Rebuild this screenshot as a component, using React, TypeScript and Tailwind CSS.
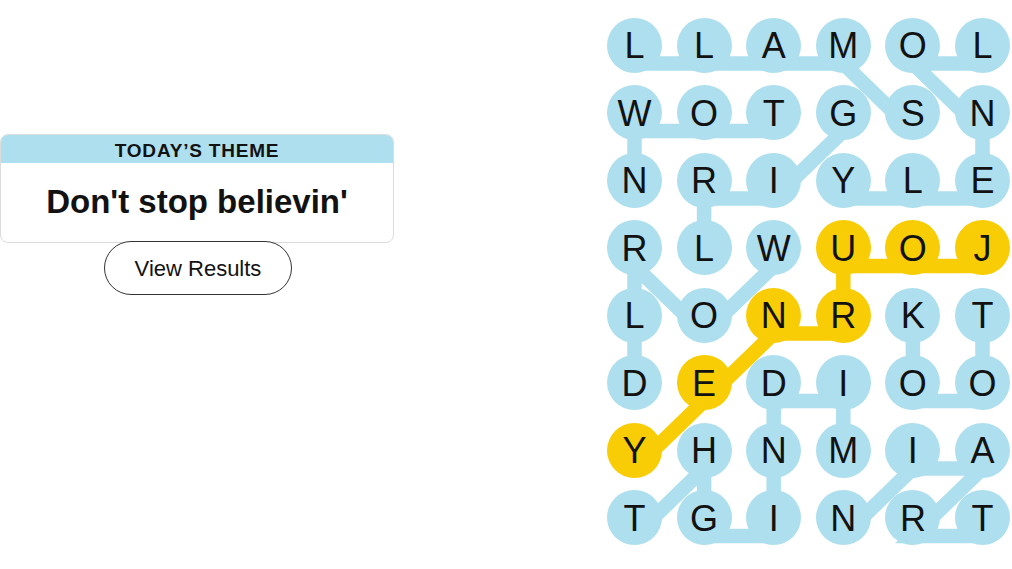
import React from "react";

const LETTERS = [
  "LLAMOL",
  "WOTGSN",
  "NRIYLE",
  "RLWUOJ",
  "LONRKT",
  "DEDIOO",
  "YHNMIA",
  "TGINRT",
];

const BLUE = "#aedfee";
const YELLOW = "#f8cd05";

type Word = { cells: [number, number][]; spangram?: boolean };

const WORDS: Word[] = [
  { cells: [[1, 4], [0, 3], [0, 2], [0, 1], [0, 0]] },
  { cells: [[0, 5], [0, 4], [1, 5], [2, 5], [2, 4], [2, 3]] },
  { cells: [[1, 2], [1, 1], [1, 0], [2, 0]] },
  { cells: [[1, 3], [2, 2], [2, 1], [3, 1]] },
  { cells: [[3, 2], [4, 1], [3, 0], [4, 0], [5, 0]] },
  { cells: [[3, 5], [3, 4], [3, 3], [4, 3], [4, 2], [5, 1], [6, 0]], spangram: true },
  { cells: [[4, 5], [5, 5], [5, 4], [4, 4]] },
  { cells: [[6, 3], [5, 3], [5, 2], [6, 2], [7, 2], [7, 1], [6, 1], [7, 0]] },
  { cells: [[7, 5], [7, 4], [6, 5], [6, 4], [7, 3]] },
];

const colX = (c: number) => 27.5 + c * 69.6;
const rowY = (r: number) => 27.5 + r * 67.5 + 18;

const spanSet = new Set(
  WORDS.filter((w) => w.spangram).flatMap((w) => w.cells.map(([r, c]) => `${r}-${c}`))
);

function Board() {
  return (
    <div className="relative w-[403px] h-[528px]">
      <svg
        className="absolute left-0 top-0 overflow-visible"
        width={403}
        height={528}
        viewBox="0 0 403 528"
      >
        {WORDS.map((w, i) => (
          <polyline
            key={i}
            points={w.cells.map(([r, c]) => `${colX(c)},${rowY(r)}`).join(" ")}
            fill="none"
            stroke={w.spangram ? YELLOW : BLUE}
            strokeWidth={14.5}
            strokeLinejoin="miter"
            strokeLinecap="butt"
          />
        ))}
      </svg>
      <div className="relative grid grid-cols-[repeat(6,55px)] gap-x-[14.6px] gap-y-[12.5px]">
        {LETTERS.flatMap((row, r) =>
          row.split("").map((ch, c) => (
            <div
              key={`${r}-${c}`}
              className={`w-[55px] h-[55px] rounded-full flex items-center justify-center text-[36px] leading-none text-[#121212] font-['Liberation_Sans',Arial,sans-serif] ${
                spanSet.has(`${r}-${c}`) ? "bg-[#f8cd05]" : "bg-[#aedfee]"
              }`}
            >
              <span className="translate-y-[1px]">{ch}</span>
            </div>
          ))
        )}
      </div>
    </div>
  );
}

export default function App() {
  return (
    <div className="w-[1012px] h-[569px] bg-white flex overflow-hidden font-['Liberation_Sans',Arial,sans-serif] text-[#121212]">
      <div className="w-[394px] shrink-0 pt-[134px] flex flex-col">
        <div className="border border-[#dcdcdc] rounded-[8px] overflow-hidden">
          <div className="h-[29px] bg-[#aedfee] flex items-start justify-center pt-[7px] text-[19px] font-bold tracking-[0.8px] leading-none -mt-px">
            TODAY’S THEME
          </div>
          <div className="h-[79px] flex items-center justify-center text-[33px] font-bold leading-none pb-[2px]">
            Don't stop believin'
          </div>
        </div>
        <button className="self-center mt-[-2px] ml-[2px] w-[188px] h-[54px] rounded-full border border-[#333] bg-white text-[22px] leading-none flex items-center justify-center pt-[2px]">
          View Results
        </button>
      </div>
      <div className="ml-[213px] pt-[17.5px]">
        <Board />
      </div>
    </div>
  );
}
